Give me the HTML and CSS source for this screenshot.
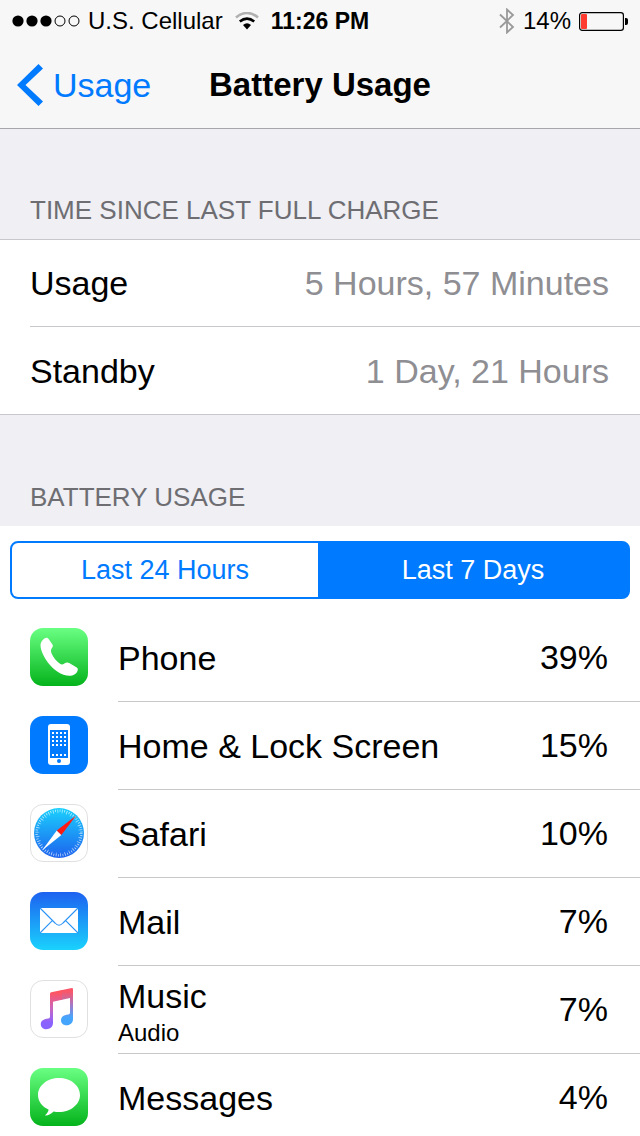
FILE: index.html
```
<!DOCTYPE html>
<html lang="en">
<head>
  <meta charset="utf-8">
  <meta name="viewport" content="width=device-width, initial-scale=1">
  <title>Battery Usage</title>
  <link rel="stylesheet" href="styles.css">
</head>
<body>
  <div class="screen">
    <header class="header">
      <div class="status-bar">
        <div class="status-left">
          <svg class="signal" width="68" height="12" viewBox="0 0 68 12" role="img" aria-label="Signal 3 of 5">
            <circle cx="6" cy="6" r="5.6"/>
            <circle cx="20" cy="6" r="5.6"/>
            <circle cx="34" cy="6" r="5.6"/>
            <circle class="signal-off" cx="48" cy="6" r="5"/>
            <circle class="signal-off" cx="62" cy="6" r="5"/>
          </svg>
          <span>U.S. Cellular</span>
          <svg class="wifi" width="24" height="18" viewBox="0 0 24 18" role="img" aria-label="Wi-Fi">
            <path d="M1 5.5Q12-3.5 23 5.5" fill="none" stroke="#b0b0b0" stroke-width="2.6"/>
            <path d="M4.8 9.6Q12 3.6 19.2 9.6" fill="none" stroke="#000" stroke-width="2.6"/>
            <path d="M8 13Q12 9.6 16 13L12 17.5z"/>
          </svg>
        </div>
        <time class="clock">11:26 PM</time>
        <div class="status-right">
          <svg class="bluetooth" width="16" height="26" viewBox="0 0 16 26" role="img" aria-label="Bluetooth">
            <path d="M1 6.5L14 19L8 24.5V1.5L14 7L1 19.5" fill="none" stroke="#999" stroke-width="1.8"/>
          </svg>
          <span>14%</span>
          <svg class="battery" width="49" height="19" viewBox="0 0 49 19" role="img" aria-label="Battery">
            <rect x=".6" y=".6" width="43.8" height="17.8" rx="2.6" fill="none" stroke="#000" stroke-width="1.2"/>
            <rect x="2" y="2" width="6" height="15" rx="1" fill="#ff3b30"/>
            <path d="M46 6h1a2 2 0 0 1 2 2v3a2 2 0 0 1-2 2h-1z"/>
          </svg>
        </div>
      </div>
      <nav class="nav-bar">
        <a class="back" href="#usage">
          <svg width="26" height="42" viewBox="0 0 26 42" aria-hidden="true">
            <path d="M21.5 0L26 4.5L8.5 21L26 37.5L21.5 42L0 21z" fill="#007aff"/>
          </svg>
          Usage
        </a>
        <h1 class="title">Battery Usage</h1>
      </nav>
    </header>

    <main class="content">
      <h2 class="section-title">TIME SINCE LAST FULL CHARGE</h2>
      <dl class="times">
        <div class="time-row">
          <dt>Usage</dt>
          <dd>5 Hours, 57 Minutes</dd>
        </div>
        <div class="time-row">
          <dt>Standby</dt>
          <dd>1 Day, 21 Hours</dd>
        </div>
      </dl>

      <h2 class="section-title">BATTERY USAGE</h2>
      <section class="usage">
        <div class="segmented">
          <button type="button" aria-pressed="false">Last 24 Hours</button>
          <button type="button" class="selected" aria-pressed="true">Last 7 Days</button>
        </div>
        <ul class="apps">
          <li class="app">
            <svg class="app-icon" viewBox="0 0 58 58" aria-hidden="true">
              <defs>
                <linearGradient id="green" x1="0" y1="0" x2="0" y2="1">
                  <stop offset="0" stop-color="#6aff83"/>
                  <stop offset="1" stop-color="#04b31b"/>
                </linearGradient>
              </defs>
              <rect width="58" height="58" rx="13" fill="url(#green)"/>
              <path d="M10.7 15.5C11.5 12.5 14 10 16.5 9.7C17.5 9.6 18 10.2 18.6 11L22.3 16.3C23.3 17.8 22.8 19 21.8 20.3C20.6 22 20.8 23.6 21.6 25.6C23.2 29.6 27 33.8 30.4 36C31.8 36.9 33 36.4 34.3 35.6C36 34.4 37.6 34.1 39.2 35L46.8 39.6C48 40.4 48 41.6 47.5 43C46.4 45.8 43.6 47.6 41 47.7C36.5 48 31.6 46.6 27.6 43.8C20 38.4 14.5 31 11.8 23.5C10.8 20.6 10.2 17.8 10.7 15.5z" fill="#fff"/>
            </svg>
            <div class="app-body">
              <span class="app-name">Phone</span>
              <span class="percent">39%</span>
            </div>
          </li>
          <li class="app">
            <svg class="app-icon" viewBox="0 0 58 58" aria-hidden="true">
              <defs>
                <pattern id="dots" x="22" y="16" width="4" height="4" patternUnits="userSpaceOnUse">
                  <rect width="2" height="2" fill="#fff"/>
                </pattern>
              </defs>
              <rect width="58" height="58" rx="13" fill="#007aff"/>
              <rect x="18" y="8" width="22" height="41" rx="3" fill="#fff"/>
              <rect x="20" y="14" width="18" height="28" fill="#007aff"/>
              <rect x="22" y="16" width="14" height="14" fill="url(#dots)"/>
              <path d="M22 39h14" stroke="#fff" stroke-width="2" stroke-dasharray="2 2"/>
              <circle cx="29" cy="45" r="2" fill="#007aff"/>
            </svg>
            <div class="app-body">
              <span class="app-name">Home &amp; Lock Screen</span>
              <span class="percent">15%</span>
            </div>
          </li>
          <li class="app">
            <svg class="app-icon" viewBox="0 0 58 58" aria-hidden="true">
              <defs>
                <linearGradient id="compass" x1="0" y1="0" x2="0" y2="1">
                  <stop offset="0" stop-color="#1bd0fd"/>
                  <stop offset="1" stop-color="#1d62ee"/>
                </linearGradient>
              </defs>
              <rect x=".5" y=".5" width="57" height="57" rx="12.5" fill="#fff" stroke="#e0e0e0"/>
              <circle cx="29" cy="29" r="25" fill="url(#compass)"/>
              <circle cx="29" cy="29" r="22.4" fill="none" stroke="#fff" stroke-opacity=".7" stroke-width="2.4" stroke-dasharray=".8 1.546"/>
              <circle cx="29" cy="29" r="20.6" fill="none" stroke="#fff" stroke-opacity=".5" stroke-width="1.6" stroke-dasharray=".8 3.515"/>
              <path d="M12 46.5L26.8 26.5L31.4 31z" fill="#fff"/>
              <path d="M46.2 11.5L26.8 26.5L31.4 31z" fill="#ff1a14"/>
            </svg>
            <div class="app-body">
              <span class="app-name">Safari</span>
              <span class="percent">10%</span>
            </div>
          </li>
          <li class="app">
            <svg class="app-icon" viewBox="0 0 58 58" aria-hidden="true">
              <defs>
                <linearGradient id="sky" x1="0" y1="0" x2="0" y2="1">
                  <stop offset="0" stop-color="#1d62f0"/>
                  <stop offset="1" stop-color="#1ad2fd"/>
                </linearGradient>
              </defs>
              <rect width="58" height="58" rx="13" fill="url(#sky)"/>
              <rect x="10" y="16" width="38" height="25" rx="1" fill="#fff"/>
              <path d="M10 16L25 31Q29 35.4 33 31L48 16M10 41L22.3 28.6M48 41L35.7 28.6" fill="none" stroke="#2a93f5" stroke-width="1.1"/>
            </svg>
            <div class="app-body">
              <span class="app-name">Mail</span>
              <span class="percent">7%</span>
            </div>
          </li>
          <li class="app">
            <svg class="app-icon" viewBox="0 0 58 58" aria-hidden="true">
              <defs>
                <linearGradient id="note-left" x1="0" y1="8" x2="0" y2="49" gradientUnits="userSpaceOnUse">
                  <stop offset=".1" stop-color="#ff5560"/>
                  <stop offset=".5" stop-color="#c966c0"/>
                  <stop offset=".85" stop-color="#8a62ff"/>
                </linearGradient>
                <linearGradient id="note-right" x1="0" y1="8" x2="0" y2="45" gradientUnits="userSpaceOnUse">
                  <stop offset=".1" stop-color="#f9566a"/>
                  <stop offset=".45" stop-color="#a777c4"/>
                  <stop offset=".8" stop-color="#45a5fd"/>
                </linearGradient>
              </defs>
              <rect x=".5" y=".5" width="57" height="57" rx="12.5" fill="#fff" stroke="#e0e0e0"/>
              <path d="M31 10.3L41.8 8.1Q43 8 43 9.2V39C43 43 40 45.3 36.3 45.3C33 45.3 31 43 31 40.3C31 37.2 33.4 35.3 36.6 34.8C39 34.4 40 34.3 40 32.5V18.1L31 20z" fill="url(#note-right)"/>
              <path d="M32 10.1L21.2 12.2Q20 12.5 20 13.8V36.5C20 38.3 19 38.4 16.6 38.8C13.2 39.3 10.8 41.2 10.8 44.2C10.8 47 13 49.2 16.2 49.2C20 49.2 23 46.8 23 43V21.7L32 19.8z" fill="url(#note-left)"/>
            </svg>
            <div class="app-body">
              <span class="app-name">Music <small>Audio</small></span>
              <span class="percent">7%</span>
            </div>
          </li>
          <li class="app">
            <svg class="app-icon" viewBox="0 0 58 58" aria-hidden="true">
              <rect width="58" height="58" rx="13" fill="url(#green)"/>
              <path d="M29 10C40.6 10 50 17.5 50 27S40.6 44 29 44Q26.2 44 23.6 43.4C21.5 45.6 18.5 47.3 15.5 47.6C15 47.6 15 47.2 15.4 46.9C17.6 45.2 18.6 43.2 18.5 41.6C12 38.6 8 33 8 27C8 17.5 17.4 10 29 10z" fill="#fff"/>
            </svg>
            <div class="app-body">
              <span class="app-name">Messages</span>
              <span class="percent">4%</span>
            </div>
          </li>
        </ul>
      </section>
    </main>
  </div>
</body>
</html>
```
FILE: styles.css
```
*, *::before, *::after {
  box-sizing: border-box;
}
body {
  margin: 0;
  background: #efeff4;
  color: #000;
  font-family: "Liberation Sans", Arial, sans-serif;
  font-size: 34px;
  line-height: 40px;
}
h1, h2, ul, dl, dd {
  margin: 0;
  padding: 0;
}
svg {
  display: block;
  flex: none;
}

/* the list scrolls under the fixed bars */
.screen {
  display: flex;
  flex-direction: column;
  height: 100vh;
}
.content {
  flex: 1;
  min-height: 0;
  overflow-y: auto;
  scrollbar-width: none;
}

/* Header */
.header {
  background: #f7f7f7;
  border-bottom: 1px solid #a7a7aa;
}
.status-bar {
  display: grid;
  grid-template-columns: 1fr auto 1fr;
  align-items: center;
  height: 42px;
  padding: 0 12px;
  font-size: 24px;
}
.status-left,
.status-right {
  display: flex;
  align-items: center;
  gap: 8px;
}
.status-right {
  justify-content: flex-end;
}
.signal-off {
  fill: none;
  stroke: #000;
}
.wifi {
  margin-left: 4px;
}
.clock {
  font-size: 23px;
  font-weight: bold;
}
.nav-bar {
  display: grid;
  grid-template-columns: 1fr auto 1fr;
  align-items: center;
  height: 86px;
  padding: 0 17px;
}
.back {
  display: flex;
  align-items: center;
  gap: 10px;
  color: #007aff;
  text-decoration: none;
}
.title {
  font-size: 33px;
  font-weight: bold;
}

/* Time since last full charge */
.section-title {
  padding: 66px 30px 14px;
  color: #6d6d72;
  font-size: 26px;
  font-weight: normal;
  line-height: 30px;
}
.times {
  margin-bottom: 1px;
  background: #fff;
  border-top: 1px solid #c8c7cc;
  border-bottom: 1px solid #c8c7cc;
}
.time-row {
  display: flex;
  align-items: center;
  justify-content: space-between;
  height: 87px;
  margin-left: 30px;
  padding-right: 31px;
  border-bottom: 1px solid #c8c7cc;
}
.time-row:last-child {
  border-bottom: 0;
}
.time-row dd {
  color: #8e8e93;
}

/* Battery usage */
.usage {
  padding-top: 15px;
  background: #fff;
}
.segmented {
  display: grid;
  grid-template-columns: 1fr 1fr;
  height: 58px;
  margin: 0 10px 15px;
  overflow: hidden;
  background: #007aff;
  border: 2px solid #007aff;
  border-radius: 8px;
}
.segmented button {
  padding: 0;
  border: 0;
  border-right: 2px solid #007aff;
  background: #fff;
  color: #007aff;
  font: inherit;
  font-size: 27px;
}
.segmented .selected {
  background: #007aff;
  color: #fff;
}
.apps {
  list-style: none;
}
.app {
  display: flex;
  align-items: center;
  gap: 30px;
  height: 88px;
  padding-left: 30px;
}
.app-icon {
  width: 58px;
  height: 58px;
  margin-bottom: 2px;
}
.app-body {
  display: flex;
  flex: 1;
  align-items: center;
  justify-content: space-between;
  height: 88px;
  padding-right: 32px;
  border-bottom: 1px solid #c8c7cc;
}
.app-name small {
  display: block;
  margin: 2px 0 -4px;
  font-size: 24px;
  line-height: 30px;
}
.percent {
  padding-bottom: 2px;
}
```
